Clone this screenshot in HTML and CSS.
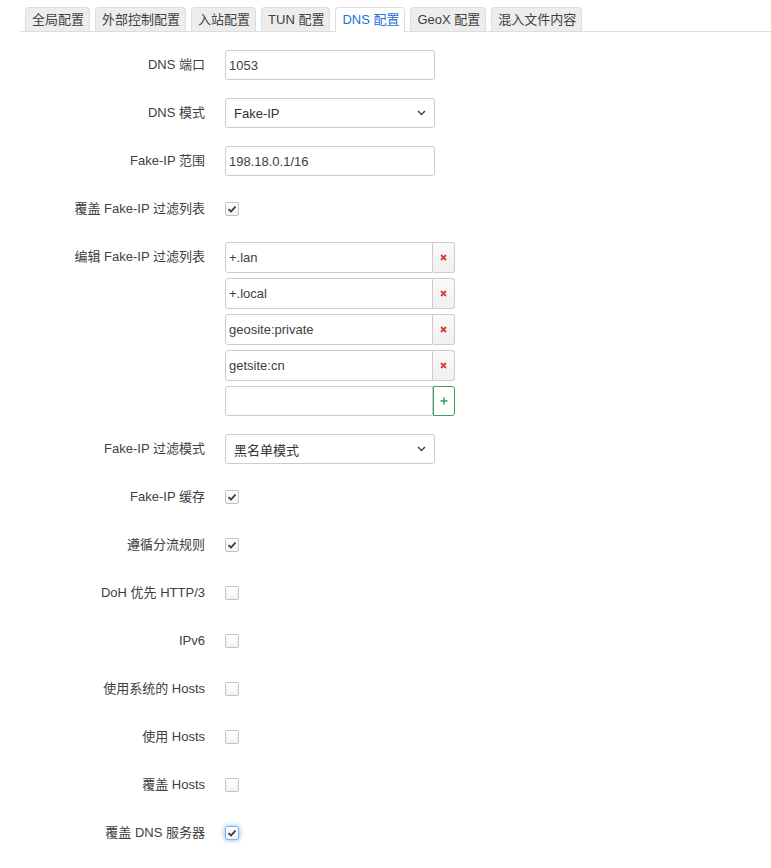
FILE: index.html
```html
<!DOCTYPE html>
<html lang="zh-CN">
<head>
    <meta charset="UTF-8">
    <meta name="viewport" content="width=device-width, initial-scale=1.0">
    <title>DNS 配置</title>
    <link rel="stylesheet" href="styles.css">
</head>
<body>
    <div class="page">
        <!-- Tabs -->
        <ul class="tabs">
            <li>全局配置</li>
            <li>外部控制配置</li>
            <li>入站配置</li>
            <li>TUN 配置</li>
            <li class="active">DNS 配置</li>
            <li>GeoX 配置</li>
            <li>混入文件内容</li>
        </ul>

        <!-- DNS form -->
        <div class="form">
            <div class="row">
                <div class="label">DNS 端口</div>
                <div class="field"><input class="text" type="text" value="1053"></div>
            </div>

            <div class="row">
                <div class="label">DNS 模式</div>
                <div class="field">
                    <div class="select">
                        <span>Fake-IP</span>
                        <svg width="9" height="6" viewBox="0 0 9 6"><polyline points="1,1 4.5,4.5 8,1" fill="none" stroke="#444" stroke-width="1.5"/></svg>
                    </div>
                </div>
            </div>

            <div class="row">
                <div class="label">Fake-IP 范围</div>
                <div class="field"><input class="text" type="text" value="198.18.0.1/16"></div>
            </div>

            <div class="row">
                <div class="label">覆盖 Fake-IP 过滤列表</div>
                <div class="field">
                    <span class="cbox"><svg width="14" height="14" viewBox="0 0 14 14"><polyline points="3.5,7.2 6,9.6 10.5,4.6" fill="none" stroke="#333" stroke-width="1.7"/></svg></span>
                </div>
            </div>

            <div class="row">
                <div class="label">编辑 Fake-IP 过滤列表</div>
                <div class="field">
                    <div class="dynlist">
                        <div class="item">
                            <input class="text" type="text" value="+.lan">
                            <span class="btn remove"><svg width="7" height="7" viewBox="0 0 7 7"><path d="M1 1L6 6M6 1L1 6" stroke="#d43f3a" stroke-width="1.8"/></svg></span>
                        </div>
                        <div class="item">
                            <input class="text" type="text" value="+.local">
                            <span class="btn remove"><svg width="7" height="7" viewBox="0 0 7 7"><path d="M1 1L6 6M6 1L1 6" stroke="#d43f3a" stroke-width="1.8"/></svg></span>
                        </div>
                        <div class="item">
                            <input class="text" type="text" value="geosite:private">
                            <span class="btn remove"><svg width="7" height="7" viewBox="0 0 7 7"><path d="M1 1L6 6M6 1L1 6" stroke="#d43f3a" stroke-width="1.8"/></svg></span>
                        </div>
                        <div class="item">
                            <input class="text" type="text" value="getsite:cn">
                            <span class="btn remove"><svg width="7" height="7" viewBox="0 0 7 7"><path d="M1 1L6 6M6 1L1 6" stroke="#d43f3a" stroke-width="1.8"/></svg></span>
                        </div>
                        <div class="item last">
                            <input class="text" type="text" value="">
                            <span class="btn add"><svg width="8" height="8" viewBox="0 0 8 8"><path d="M4 0.5V7.5M0.5 4H7.5" stroke="#22a36a" stroke-width="1.4"/></svg></span>
                        </div>
                    </div>
                </div>
            </div>

            <div class="row">
                <div class="label">Fake-IP 过滤模式</div>
                <div class="field">
                    <div class="select">
                        <span>黑名单模式</span>
                        <svg width="9" height="6" viewBox="0 0 9 6"><polyline points="1,1 4.5,4.5 8,1" fill="none" stroke="#444" stroke-width="1.5"/></svg>
                    </div>
                </div>
            </div>

            <div class="row">
                <div class="label">Fake-IP 缓存</div>
                <div class="field">
                    <span class="cbox"><svg width="14" height="14" viewBox="0 0 14 14"><polyline points="3.5,7.2 6,9.6 10.5,4.6" fill="none" stroke="#333" stroke-width="1.7"/></svg></span>
                </div>
            </div>

            <div class="row">
                <div class="label">遵循分流规则</div>
                <div class="field">
                    <span class="cbox"><svg width="14" height="14" viewBox="0 0 14 14"><polyline points="3.5,7.2 6,9.6 10.5,4.6" fill="none" stroke="#333" stroke-width="1.7"/></svg></span>
                </div>
            </div>

            <div class="row">
                <div class="label">DoH 优先 HTTP/3</div>
                <div class="field"><span class="cbox"></span></div>
            </div>

            <div class="row">
                <div class="label">IPv6</div>
                <div class="field"><span class="cbox"></span></div>
            </div>

            <div class="row">
                <div class="label">使用系统的 Hosts</div>
                <div class="field"><span class="cbox"></span></div>
            </div>

            <div class="row">
                <div class="label">使用 Hosts</div>
                <div class="field"><span class="cbox"></span></div>
            </div>

            <div class="row">
                <div class="label">覆盖 Hosts</div>
                <div class="field"><span class="cbox"></span></div>
            </div>

            <div class="row">
                <div class="label">覆盖 DNS 服务器</div>
                <div class="field">
                    <span class="cbox focus"><svg width="14" height="14" viewBox="0 0 14 14"><polyline points="3.5,7.2 6,9.6 10.5,4.6" fill="none" stroke="#333" stroke-width="1.7"/></svg></span>
                </div>
            </div>
        </div>
    </div>
</body>
</html>
```

FILE: styles.css
```css
/* General Styles */
body {
    font-family: 'Liberation Sans', 'Noto Sans CJK SC', sans-serif;
    font-size: 13px;
    color: #404040;
    margin: 0;
    padding: 0;
    background-color: #fff;
}

.page {
    padding-left: 20px;
}

/* Tabs */
.tabs {
    display: flex;
    gap: 5px;
    list-style: none;
    margin: 7px 0 0 0;
    padding: 0 0 0 5px;
    border-bottom: 1px solid #ddd;
}

.tabs li {
    height: 23px;
    line-height: 23px;
    padding: 0 5px 0 6px;
    background-color: #ededed;
    border: 1px solid #ddd;
    border-bottom: none;
    border-radius: 4px 4px 0 0;
    white-space: nowrap;
}

.tabs li.active {
    background-color: #fff;
    color: #1a73d9;
    height: 24px;
    margin-bottom: -1px;
}

/* Form */
.form {
    padding-top: 18px;
}

.row {
    display: flex;
    align-items: flex-start;
    gap: 20px;
    margin-bottom: 18px;
}

.label {
    width: 185px;
    flex-shrink: 0;
    text-align: right;
    line-height: 30px;
    white-space: nowrap;
}

.field {
    min-height: 30px;
    display: flex;
    align-items: center;
}

.text {
    box-sizing: border-box;
    width: 210px;
    height: 30px;
    padding: 0 3px;
    border: 1px solid #ccc;
    border-radius: 3px;
    font-family: inherit;
    font-size: 13px;
    color: #404040;
    background-color: #fff;
    outline: none;
}

.select {
    box-sizing: border-box;
    width: 210px;
    height: 30px;
    padding: 0 8px 0 8px;
    border: 1px solid #ccc;
    border-radius: 3px;
    display: flex;
    justify-content: space-between;
    align-items: center;
    color: #333;
}

/* Checkbox */
.cbox {
    box-sizing: border-box;
    width: 14px;
    height: 14px;
    border: 1px solid #c4c4c4;
    border-radius: 2px;
    background: linear-gradient(#fff, #f2f2f2);
    display: flex;
    align-items: center;
    justify-content: center;
}

.cbox svg {
    flex-shrink: 0;
}

.cbox.focus {
    border-color: #7ab6ee;
    box-shadow: 0 0 5px rgba(60, 150, 240, 0.7);
}

/* Dynamic list */
.dynlist {
    width: 230px;
}

.dynlist .item {
    display: flex;
    height: 31px;
    margin-bottom: 5px;
}

.dynlist .item.last {
    height: 30px;
    margin-bottom: 0;
}

.dynlist .text {
    flex: 1;
    width: auto;
    height: 100%;
    border-radius: 3px 0 0 3px;
}

.dynlist .btn {
    box-sizing: border-box;
    width: 22px;
    height: 100%;
    display: flex;
    align-items: center;
    justify-content: center;
    border: 1px solid #ccc;
    border-left: none;
    border-radius: 0 3px 3px 0;
    background: linear-gradient(#fafafa, #f0f0f0);
}

.dynlist .btn.add {
    border: 1px solid #3aa35b;
    background: #fff;
}
```
